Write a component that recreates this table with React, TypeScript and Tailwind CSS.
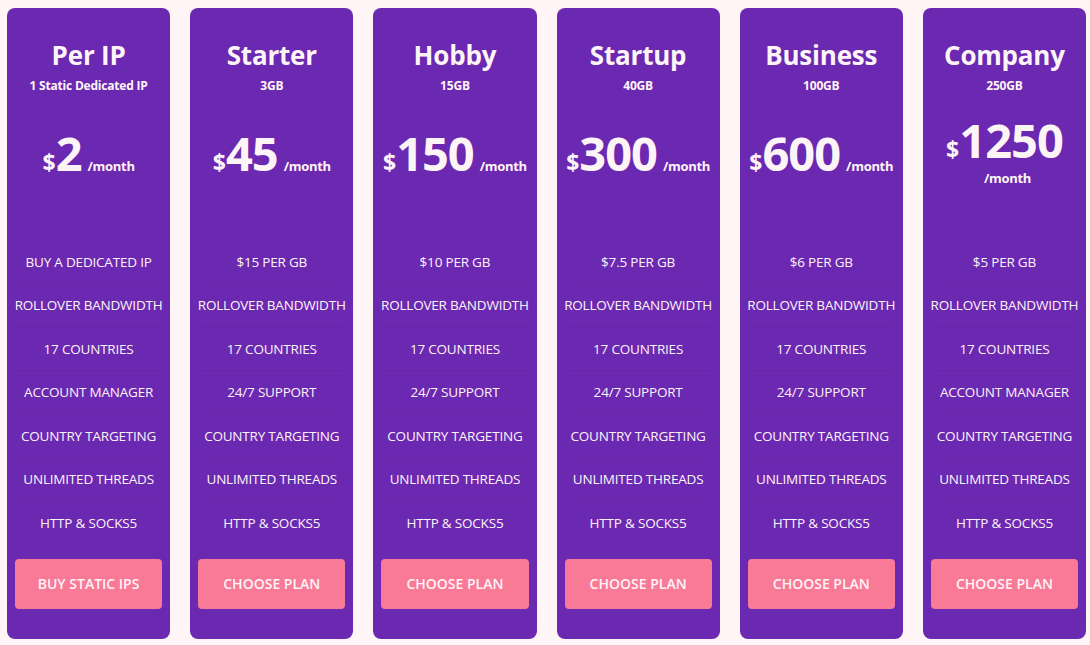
import React from 'react'

interface Plan {
  name: string
  sub: string
  price: string
  features: string[]
  cta: string
}

const common = ['ROLLOVER BANDWIDTH', '17 COUNTRIES']
const tail = ['COUNTRY TARGETING', 'UNLIMITED THREADS', 'HTTP & SOCKS5']

const plans: Plan[] = [
  { name: 'Per IP', sub: '1 Static Dedicated IP', price: '2', features: ['BUY A DEDICATED IP', ...common, 'ACCOUNT MANAGER', ...tail], cta: 'BUY STATIC IPS' },
  { name: 'Starter', sub: '3GB', price: '45', features: ['$15 PER GB', ...common, '24/7 SUPPORT', ...tail], cta: 'CHOOSE PLAN' },
  { name: 'Hobby', sub: '15GB', price: '150', features: ['$10 PER GB', ...common, '24/7 SUPPORT', ...tail], cta: 'CHOOSE PLAN' },
  { name: 'Startup', sub: '40GB', price: '300', features: ['$7.5 PER GB', ...common, '24/7 SUPPORT', ...tail], cta: 'CHOOSE PLAN' },
  { name: 'Business', sub: '100GB', price: '600', features: ['$6 PER GB', ...common, '24/7 SUPPORT', ...tail], cta: 'CHOOSE PLAN' },
  { name: 'Company', sub: '250GB', price: '1250', features: ['$5 PER GB', ...common, 'ACCOUNT MANAGER', ...tail], cta: 'CHOOSE PLAN' },
]

function PlanCard({ plan }: { plan: Plan }) {
  return (
    <div className="flex-1 min-w-0 h-[631px] bg-[#6b28b0] rounded-lg flex flex-col px-2 text-[#fdf4f8]">
      {/* Header */}
      <div className="h-[233px] text-center pt-[30px]">
        <h2 className="text-[26px] font-bold leading-[34px] tracking-[-0.2px]">{plan.name}</h2>
        <p className="text-[12px] font-bold leading-4 mt-[6px] tracking-[-0.2px]">{plan.sub}</p>
        {/* Price */}
        <div className="mt-[24px] h-[72px] flex flex-wrap justify-center items-baseline content-center gap-y-1">
          <span className="whitespace-nowrap leading-none">
            <span className="text-[23px] font-bold">$</span>
            <span className="inline-block h-[44px] text-[47px] font-bold leading-[44px] tracking-[-1px]">{plan.price}</span>
          </span>
          <span className="ml-[6px] text-[13px] font-bold leading-[24px] tracking-[-0.3px]">/month</span>
        </div>
      </div>

      {/* Features */}
      <ul className="flex flex-col">
        {plan.features.map((f, i) => (
          <li
            key={i}
            className={`h-[43.4px] flex items-center justify-center text-[13.5px] tracking-[-0.2px] whitespace-nowrap ${i < plan.features.length - 1 ? 'border-b border-[#6626aa]' : ''}`}
          >
            {f}
          </li>
        ))}
      </ul>

      <button className="mt-[14px] h-[50px] rounded bg-[#f87a97] text-[14px] font-semibold text-[#fff3f6]">
        {plan.cta}
      </button>
    </div>
  )
}

export default function App() {
  return (
    <div
      className="min-h-screen bg-[#fff5f7] pt-2 pl-[7px] pr-[4px] flex gap-5 items-start"
      style={{ fontFamily: '"Open Sans", "Noto Sans", sans-serif' }}
    >
      {plans.map((p) => (
        <PlanCard key={p.name} plan={p} />
      ))}
    </div>
  )
}
